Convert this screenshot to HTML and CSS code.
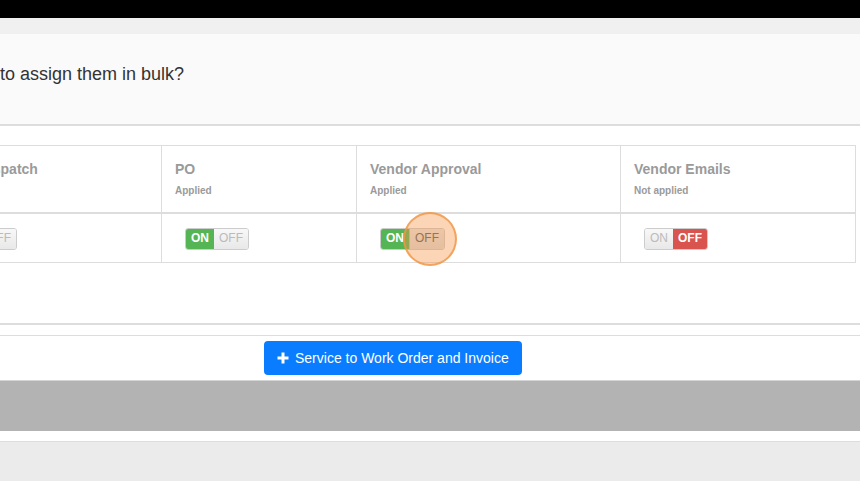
FILE: index.html
```html
<!doctype html>

<html lang="en">
<head>
    <meta charset="utf-8">
    <title>Bulk Assign</title>
    <link rel="stylesheet" href="styles.css">
</head>

<body>
    <div class="top-bar"></div>
    <div class="sub-bar"></div>

    <div class="question">
        <p>to assign them in bulk?</p>
    </div>

    <div class="settings">
        <table class="settings-table">
            <thead>
                <tr>
                    <th class="col-dispatch">
                        <div class="title">Auto Dispatch</div>
                        <div class="state">Applied</div>
                    </th>
                    <th class="col-po">
                        <div class="title">PO</div>
                        <div class="state">Applied</div>
                    </th>
                    <th class="col-approval">
                        <div class="title">Vendor Approval</div>
                        <div class="state">Applied</div>
                    </th>
                    <th class="col-emails">
                        <div class="title">Vendor Emails</div>
                        <div class="state">Not applied</div>
                    </th>
                </tr>
            </thead>
            <tbody>
                <tr>
                    <td>
                        <div class="switch">
                            <span class="switch-on">ON</span><span class="switch-off">OFF</span>
                        </div>
                    </td>
                    <td>
                        <div class="switch">
                            <span class="switch-on">ON</span><span class="switch-off">OFF</span>
                        </div>
                    </td>
                    <td>
                        <div class="switch">
                            <span class="switch-on">ON</span><span class="switch-off is-hover">OFF</span>
                            <span class="click-mark"></span>
                        </div>
                    </td>
                    <td>
                        <div class="switch is-off">
                            <span class="switch-on">ON</span><span class="switch-off">OFF</span>
                        </div>
                    </td>
                </tr>
            </tbody>
        </table>
    </div>

    <div class="divider"></div>

    <div class="actions">
        <button type="button" class="add-button">
            <svg width="12" height="12" viewBox="0 0 12 12">
                <path d="M6 0.5v11M0.5 6h11" stroke="#ffffff" stroke-width="3"/>
            </svg>
            Service to Work Order and Invoice
        </button>
    </div>

    <div class="gray-band"></div>
    <div class="footer"></div>
</body>
</html>
```

FILE: styles.css
```css
body {
    margin: 0;
    font-family: "Liberation Sans", Arial, sans-serif;
    background-color: #ffffff;
    overflow: hidden;
}

.top-bar {
    height: 18px;
    background-color: #000000;
}

.sub-bar {
    height: 16px;
    background-color: #f0f0f0;
}

.question {
    height: 90px;
    background-color: #fafafa;
    border-bottom: 2px solid #dddddd;
}

.question p {
    margin: 0;
    padding-top: 29px;
    font-size: 18px;
    line-height: 22px;
    color: #333333;
}

.settings {
    padding-top: 19px;
    height: 178px;
}

.settings-table {
    border-collapse: collapse;
    margin-left: -71px;
    table-layout: fixed;
}

.settings-table th, .settings-table td {
    border: 1px solid #dddddd;
    text-align: left;
    vertical-align: top;
}

.settings-table th {
    padding: 13px 13px 14px;
    border-bottom: 2px solid #dddddd;
}

.settings-table td {
    padding: 14px 23px 12px;
}

.col-dispatch { width: 205px; }
.col-po { width: 168px; }
.col-approval { width: 237px; }
.col-emails { width: 208px; }

.title {
    font-size: 14px;
    line-height: 20px;
    font-weight: bold;
    color: #9a9a9a;
}

.state {
    margin-top: 5px;
    font-size: 10px;
    line-height: 14px;
    font-weight: bold;
    color: #9a9a9a;
}

.switch {
    position: relative;
    display: inline-flex;
    height: 20px;
    border: 1px solid #cccccc;
    border-radius: 3px;
    font-size: 12px;
    line-height: 18px;
}

.switch-on, .switch-off {
    padding: 0 5px;
}

.switch-on {
    background-color: #55b555;
    color: #ffffff;
    font-weight: bold;
    border-radius: 2px 0 0 2px;
}

.switch-off {
    background: linear-gradient(#f8f8f8, #e8e8e8);
    color: #bbbbbb;
    border-radius: 0 2px 2px 0;
}

.switch-off.is-hover {
    background: linear-gradient(#e6e6e6, #dadada);
    color: #5a5a5a;
    border-left: 1px solid #bbbbbb;
}

.is-off .switch-on {
    background: linear-gradient(#f8f8f8, #e8e8e8);
    color: #bbbbbb;
    font-weight: normal;
}

.is-off .switch-off {
    background: #d9534f;
    color: #ffffff;
    font-weight: bold;
}

.click-mark {
    position: absolute;
    left: 22px;
    top: -17px;
    width: 50px;
    height: 50px;
    border: 2px solid rgba(240, 150, 70, 0.8);
    border-radius: 50%;
    background-color: rgba(245, 150, 70, 0.4);
}

.divider {
    height: 10px;
    border-top: 2px solid #dddddd;
    border-bottom: 1px solid #dddddd;
}

.actions {
    padding: 5px 0 5px 264px;
    border-bottom: 1px solid #d4d4d4;
}

.add-button {
    display: flex;
    align-items: center;
    gap: 6px;
    height: 34px;
    padding: 0 13px;
    border: none;
    border-radius: 4px;
    background-color: #0a7cff;
    color: #ffffff;
    font-family: "Liberation Sans", Arial, sans-serif;
    font-size: 14px;
}

.gray-band {
    height: 50px;
    background-color: #b3b3b3;
}

.footer {
    height: 39px;
    margin-top: 10px;
    border-top: 1px solid #dddddd;
    background-color: #ebebeb;
}
```
